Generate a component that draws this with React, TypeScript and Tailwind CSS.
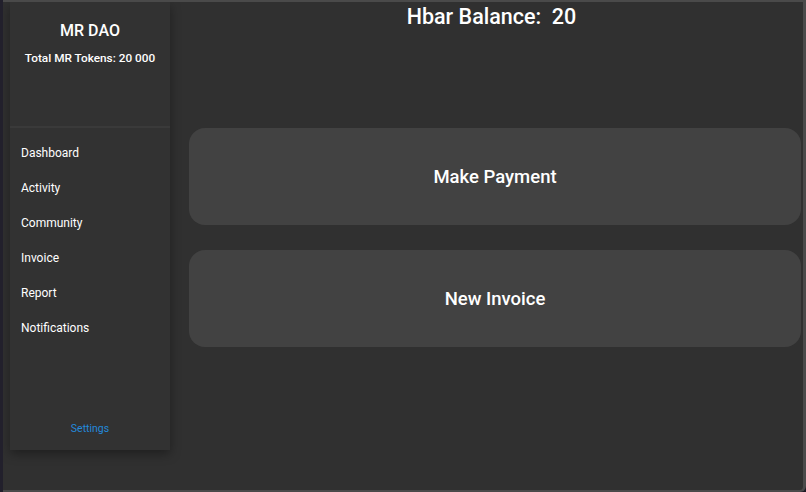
import React from "react";

const navItems = ["Dashboard", "Activity", "Community", "Invoice", "Report", "Notifications"];

const Sidebar = () => {
  return (
    <aside className="flex h-[448px] w-[160px] shrink-0 flex-col bg-[#323232] shadow-[0_4px_10px_rgba(0,0,0,0.35)]">
      {/* Kopfbereich */}
      <div className="flex h-[126px] flex-col items-center border-b-2 border-[#3a3a3a] pt-[19px]">
        <p className="text-[16px] font-medium leading-5 text-white">MR DAO</p>
        <p className="mt-[9px] text-[11.8px] font-medium leading-4 text-white">Total MR Tokens: 20 000</p>
      </div>

      <nav className="flex flex-col pt-[7px]">
        {navItems.map((item) => (
          <a key={item} className="flex h-[35px] items-center pl-[11px] text-[12px] text-white">
            {item}
          </a>
        ))}
      </nav>

      <div className="mt-auto flex justify-center pb-[13px]">
        <a className="text-[10.5px] text-[#2389dc]">Settings</a>
      </div>
    </aside>
  );
};

const ActionCard = ({ label }: { label: string }) => (
  <button
    type="button"
    className="flex h-[97px] w-full items-center justify-center rounded-[16px] bg-[#424242] pt-[2px] text-[18.5px] font-medium text-white"
  >
    {label}
  </button>
);

export default function App() {
  return (
    <div
      className="flex h-[492px] w-[806px] overflow-hidden bg-[#1e1b26]"
      style={{ fontFamily: "Roboto, 'Liberation Sans', sans-serif" }}
    >
      {/* Desktop-Rand links */}
      <div className="w-[3px] shrink-0 bg-[#22202c]" />

      <div className="flex flex-1 flex-col overflow-hidden rounded-br-[6px] border-t-2 border-r-[3px] border-b-2 border-[#4a4a4a] bg-[#303030]">
        <div className="flex flex-1">
          <div className="pl-[7px]">
            <Sidebar />
          </div>

          <main className="flex flex-1 flex-col pr-[2px] pl-[19px]">
            <h1 className="mt-[1px] h-[125px] pr-[7px] text-center text-[21.5px] font-medium leading-7 whitespace-pre text-white">
              {"Hbar Balance:  20"}
            </h1>
            <div className="flex flex-col gap-[25px]">
              <ActionCard label="Make Payment" />
              <ActionCard label="New Invoice" />
            </div>
          </main>
        </div>
      </div>
    </div>
  );
}
